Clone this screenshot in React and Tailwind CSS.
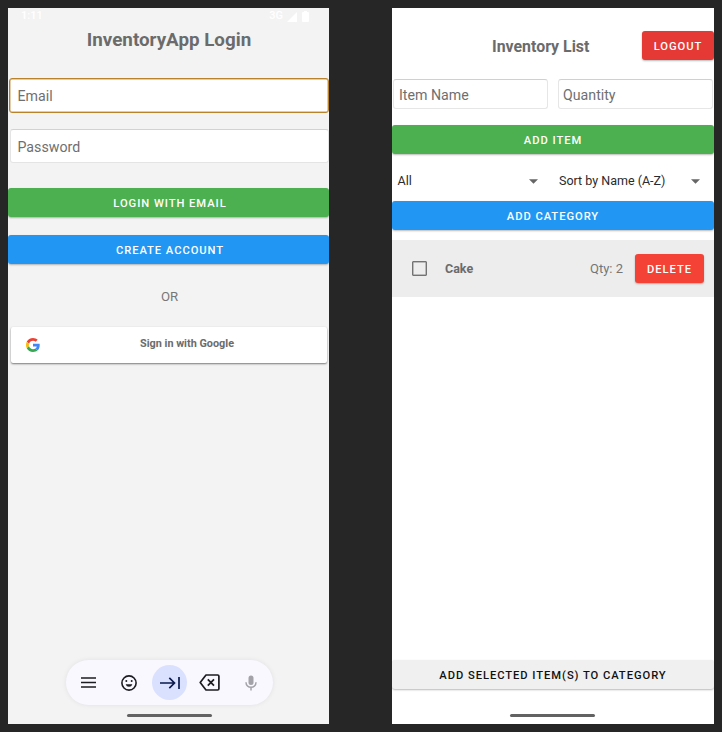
import React from "react";

function WideButton({ className = "", children }) {
  return (
    <button
      className={`flex h-[29px] w-full shrink-0 items-center justify-center rounded-[3px] pt-[3px] text-[11.2px] font-medium tracking-[0.95px] whitespace-nowrap shadow-[0_1px_2px_rgba(0,0,0,0.28)] ${className}`}
    >
      {children}
    </button>
  );
}

function Field({ className = "", children }) {
  return (
    <div
      className={`flex shrink-0 items-center rounded-[3px] bg-white text-[#6f6f6f] whitespace-nowrap ${className}`}
    >
      {children}
    </div>
  );
}

function GoogleLogo() {
  return (
    <svg width="14" height="14" viewBox="0 0 48 48">
      <path fill="#EA4335" d="M24 9.5c3.54 0 6.71 1.22 9.21 3.6l6.85-6.85C35.9 2.38 30.47 0 24 0 14.62 0 6.51 5.38 2.56 13.22l7.98 6.19C12.43 13.72 17.74 9.5 24 9.5z" />
      <path fill="#4285F4" d="M46.98 24.55c0-1.57-.15-3.09-.38-4.55H24v9.02h12.94c-.58 2.96-2.26 5.48-4.78 7.18l7.73 6c4.51-4.18 7.09-10.36 7.09-17.65z" />
      <path fill="#FBBC05" d="M10.53 28.59c-.48-1.45-.76-2.99-.76-4.59s.27-3.14.76-4.59l-7.98-6.19C.92 16.46 0 20.12 0 24c0 3.88.92 7.54 2.56 10.78l7.97-6.19z" />
      <path fill="#34A853" d="M24 48c6.48 0 11.93-2.13 15.89-5.81l-7.73-6c-2.15 1.45-4.92 2.3-8.16 2.3-6.26 0-11.57-4.22-13.47-9.91l-7.98 6.19C6.51 42.62 14.62 48 24 48z" />
    </svg>
  );
}

function StatusBar() {
  return (
    <div className="flex h-[17px] shrink-0 items-center justify-between pr-5 pl-[13px] text-[11px] font-medium text-white">
      <span>1:11</span>
      <span className="flex items-center">
        <span>3G</span>
        <svg className="ml-1" width="10" height="10" viewBox="0 0 10 10">
          <path d="M10 0v10H0z" fill="#fff" />
        </svg>
        <svg className="ml-[5px]" width="7" height="11" viewBox="0 0 7 11">
          <path d="M2 0h3v1h1a1 1 0 0 1 1 1v8a1 1 0 0 1-1 1H1a1 1 0 0 1-1-1V2a1 1 0 0 1 1-1h1z" fill="#fff" />
        </svg>
      </span>
    </div>
  );
}

function KeyboardBar() {
  return (
    <div className="ml-[58px] flex h-[45px] w-[207px] shrink-0 items-center rounded-full bg-[#f9f8ff] shadow-[0_0_5px_rgba(0,0,0,0.08)]">
      <svg className="ml-[15px]" width="15" height="11" viewBox="0 0 15 11">
        <path d="M0 1h15M0 5.5h15M0 10h15" stroke="#1b1b21" strokeWidth="1.4" />
      </svg>
      <svg className="ml-[25px]" width="16" height="16" viewBox="0 0 16 16">
        <circle cx="8" cy="8" r="7.1" fill="none" stroke="#1b1b21" strokeWidth="1.6" />
        <circle cx="5.3" cy="5.9" r="1" fill="#1b1b21" />
        <circle cx="10.7" cy="5.9" r="1" fill="#1b1b21" />
        <path d="M4.7 9.300h6.600c-.5 1.700-1.700 2.500-3.300 2.500s-2.800-.800-3.300-2.500z" fill="#1b1b21" />
      </svg>
      <span className="ml-[15px] flex h-[35px] w-[35px] items-center justify-center rounded-full bg-[#dae1ff]">
        <svg width="20" height="12" viewBox="0 0 20 12" fill="none" stroke="#0b1a4d" strokeWidth="1.700">
          <path d="M0 6h14.500M9.300 .8 14.500 6l-5.200 5.200M19 0v12" />
        </svg>
      </span>
      <svg className="ml-[12px]" width="21" height="17" viewBox="0 0 21 17" fill="none" stroke="#1b1b21" strokeWidth="1.7">
        <path d="M7 1h11.700a1.200 1.200 0 0 1 1.200 1.200v12.600a1.200 1.200 0 0 1-1.200 1.200H7L1.200 8.500z" strokeLinejoin="round" />
        <path d="M8.800 5.300l6.200 6.400M15 5.300 8.800 11.700" />
      </svg>
      <svg className="ml-[25px]" width="12" height="16" viewBox="0 0 12 16">
        <rect x="3.500" y="0.500" width="5" height="9.500" rx="2.500" fill="#a3a2a8" />
        <path d="M1 7.300c0 3 2.200 4.900 5 4.900s5-1.900 5-4.900M6 12.200V15.500" fill="none" stroke="#a3a2a8" strokeWidth="1.500" />
      </svg>
    </div>
  );
}

function HomeHandle({ className = "" }) {
  return <div className={`h-[3px] w-[85px] shrink-0 rounded-full bg-[#626262] ${className}`} />;
}

function LoginScreen() {
  return (
    <section className="flex h-[716px] w-[321px] shrink-0 flex-col overflow-hidden bg-[#f3f3f3]">
      <StatusBar />
      <h1 className="mt-[2px] h-[27px] shrink-0 pl-[1px] text-center text-[18.8px] leading-[27px] font-bold whitespace-nowrap text-[#6b6b6b]">
        InventoryApp Login
      </h1>
      <Field className="mt-[24px] ml-[1px] h-[35px] w-[320px] border-[1.5px] border-[#b9832b] pt-[3px] pl-[7.5px] text-[14.2px] shadow-[inset_0_0_0_0.5px_#c99a50]">Email</Field>
      <Field className="mt-4 ml-[2px] h-[34px] w-[319px] border border-[#e4e4e4] border-t-[#d2d2d2] pt-[3px] pl-[6.5px] text-[14.2px]">Password</Field>
      <WideButton className="mt-[25px] bg-[#4caf50] pl-[3px] text-white">LOGIN WITH EMAIL</WideButton>
      <WideButton className="mt-[18px] bg-[#2196f3] pl-[3px] text-white">CREATE ACCOUNT</WideButton>
      <p className="mt-[23px] h-5 shrink-0 pl-[2px] text-center text-[13.2px] leading-5 text-[#777]">OR</p>
      <button className="mt-5 ml-[3px] flex h-9 w-[316px] shrink-0 items-center rounded-[2px] bg-white shadow-[0_1px_2px_rgba(0,0,0,0.5)]">
        <span className="ml-[15px]">
          <GoogleLogo />
        </span>
        <span className="mb-[1px] ml-[100px] text-[10.850px] font-bold whitespace-nowrap text-[#6b6b6b]">Sign in with Google</span>
      </button>
      <div className="flex-1" />
      <KeyboardBar />
      <div className="h-[9px] shrink-0" />
      <HomeHandle className="ml-[119px]" />
      <div className="h-[7px] shrink-0" />
    </section>
  );
}

function Dropdown({ className = "", children }) {
  return (
    <div className={`flex items-center justify-between text-[12.500px] whitespace-nowrap text-[#2b2b2b] ${className}`}>
      <span>{children}</span>
      <svg width="9" height="5" viewBox="0 0 8 4">
        <path d="M0 0h8L4 4z" fill="#666" />
      </svg>
    </div>
  );
}

function InventoryScreen() {
  return (
    <section className="flex h-[716px] w-[322px] shrink-0 flex-col overflow-hidden bg-white">
      <header className="mt-[23px] flex h-[29px] shrink-0 items-center justify-between">
        <h1 className="ml-[100px] pt-[2px] text-[15.900px] font-bold whitespace-nowrap text-[#6b6b6b]">Inventory List</h1>
        <div className="w-[72px]">
          <WideButton className="bg-[#e53935] text-white">LOGOUT</WideButton>
        </div>
      </header>
      <div className="mt-[19px] flex shrink-0 gap-[10px] pl-[1px]">
        <Field className="h-[30px] w-[155px] border border-[#e6e6e6] border-t-[#d0d0d0] pt-[3px] pl-[5px] text-[14.200px]">Item Name</Field>
        <Field className="h-[30px] w-[155px] border border-[#e6e6e6] border-t-[#d0d0d0] pt-[3px] pl-[4px] text-[14.200px]">Quantity</Field>
      </div>
      <WideButton className="mt-4 bg-[#4caf50] text-white">ADD ITEM</WideButton>
      <div className="flex h-[47px] shrink-0 items-center pt-2">
        <Dropdown className="ml-[5.500px] w-[140.500px]">All</Dropdown>
        <Dropdown className="ml-[21px] w-[141px]">Sort by Name (A-Z)</Dropdown>
      </div>
      <WideButton className="bg-[#2196f3] text-white">ADD CATEGORY</WideButton>
      <div className="mt-[10px] flex h-[57px] shrink-0 items-center bg-[#ededed]">
        <span className="ml-[20px] h-[15px] w-[15px] rounded-[1px] border-[1.500px] border-[#737373] shadow-[inset_0_0_0_0.5px_#888]" />
        <span className="ml-[18px] pt-[1px] text-[12.500px] font-bold text-[#6b6b6b]">Cake</span>
        <span className="flex-1" />
        <span className="text-[13px] whitespace-nowrap text-[#757575]">Qty: 2</span>
        <div className="mr-[10px] ml-[12px] w-[69px]">
          <WideButton className="bg-[#f44336] text-white">DELETE</WideButton>
        </div>
      </div>
      <div className="flex-1" />
      <WideButton className="bg-[#f0f0f0] text-[#111]">ADD SELECTED ITEM(S) TO CATEGORY</WideButton>
      <div className="h-[25px] shrink-0" />
      <HomeHandle className="ml-[118px]" />
      <div className="h-[7px] shrink-0" />
    </section>
  );
}

export default function App() {
  return (
    <main className="flex h-[732px] w-[722px] justify-between overflow-hidden bg-[#262626] p-2 font-[Roboto,sans-serif]">
      <LoginScreen />
      <InventoryScreen />
    </main>
  );
}
